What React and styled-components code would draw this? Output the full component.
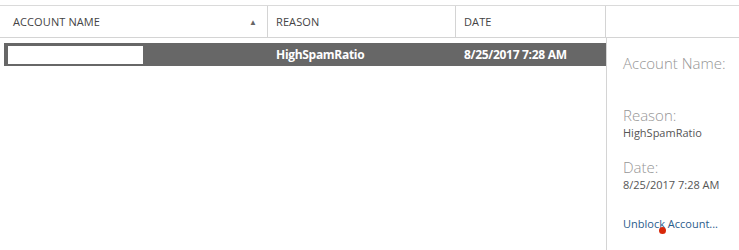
import styled, { createGlobalStyle } from 'styled-components'

const Global = createGlobalStyle`
  body {
    margin: 0;
    background: #fff;
    font-family: "Open Sans", "Noto Sans", sans-serif;
  }
`

const Page = styled.div`
  width: 739px;
  height: 250px;
  padding-top: 5px;
  box-sizing: border-box;
  overflow: hidden;
`

const Header = styled.div`
  display: grid;
  grid-template-columns: 268px 188px 150px 1fr;
  height: 31px;
  border-top: 1px solid #dadada;
  border-bottom: 1px solid #d4d4d4;
`

const HeadCell = styled.div`
  display: flex;
  align-items: center;
  justify-content: space-between;
  padding: 0 10px 0 ${p => p.$pad || 8}px;
  border-right: ${p => (p.$last ? 'none' : '1px solid #d4d4d4')};
  font-size: 11px;
  color: #444;
  letter-spacing: 0.1px;
`

const SortArrow = styled.span`
  font-size: 8px;
  color: #666;
`

const Body = styled.div`
  display: flex;
  height: 213px;
`

const List = styled.div`
  width: 606px;
  padding-top: 5px;
`

const Row = styled.div`
  display: grid;
  grid-template-columns: 264px 188px 150px;
  align-items: center;
  width: 602px;
  height: 23px;
  margin-left: 4px;
  background: #676767;
`

const Cell = styled.div`
  padding-left: 8px;
  font-size: 12px;
  font-weight: 700;
  color: #fff;
  letter-spacing: -0.3px;
  white-space: nowrap;
`

const Redacted = styled.div`
  margin-left: 4px;
  width: 135px;
  height: 18px;
  background: #fff;
`

const Panel = styled.div`
  flex: 1;
  border-left: 1px solid #d4d4d4;
  padding: 15px 0 0 16px;
`

const Label = styled.div`
  font-size: 15px;
  font-weight: 300;
  color: #959595;
  line-height: 20px;
  margin-top: ${p => p.$top || 0}px;
`

const Value = styled.div`
  font-size: 11px;
  color: #555;
  line-height: 16px;
`

const Link = styled.a`
  display: inline-block;
  position: relative;
  margin-top: 23px;
  font-size: 11px;
  line-height: 16px;
  color: #2b5d8c;
  text-decoration: none;
`

const ClickDot = styled.span`
  position: absolute;
  left: 36px;
  top: 11px;
  width: 7px;
  height: 7px;
  border-radius: 50%;
  background: #d8280a;
`

export default function App() {
  return (
    <Page>
      <Global />
      <Header>
        <HeadCell $pad={13}>
          ACCOUNT NAME
          <SortArrow>▲</SortArrow>
        </HeadCell>
        <HeadCell>REASON</HeadCell>
        <HeadCell>DATE</HeadCell>
        <HeadCell $last />
      </Header>
      <Body>
        <List>
          <Row>
            <Redacted />
            <Cell>HighSpamRatio</Cell>
            <Cell>8/25/2017 7:28 AM</Cell>
          </Row>
        </List>
        <Panel>
          <Label>Account Name:</Label>
          <Value>&nbsp;</Value>
          <Label $top={16}>Reason:</Label>
          <Value>HighSpamRatio</Value>
          <Label $top={16}>Date:</Label>
          <Value>8/25/2017 7:28 AM</Value>
          <Link href="#">
            Unblock Account...
            <ClickDot />
          </Link>
        </Panel>
      </Body>
    </Page>
  )
}
